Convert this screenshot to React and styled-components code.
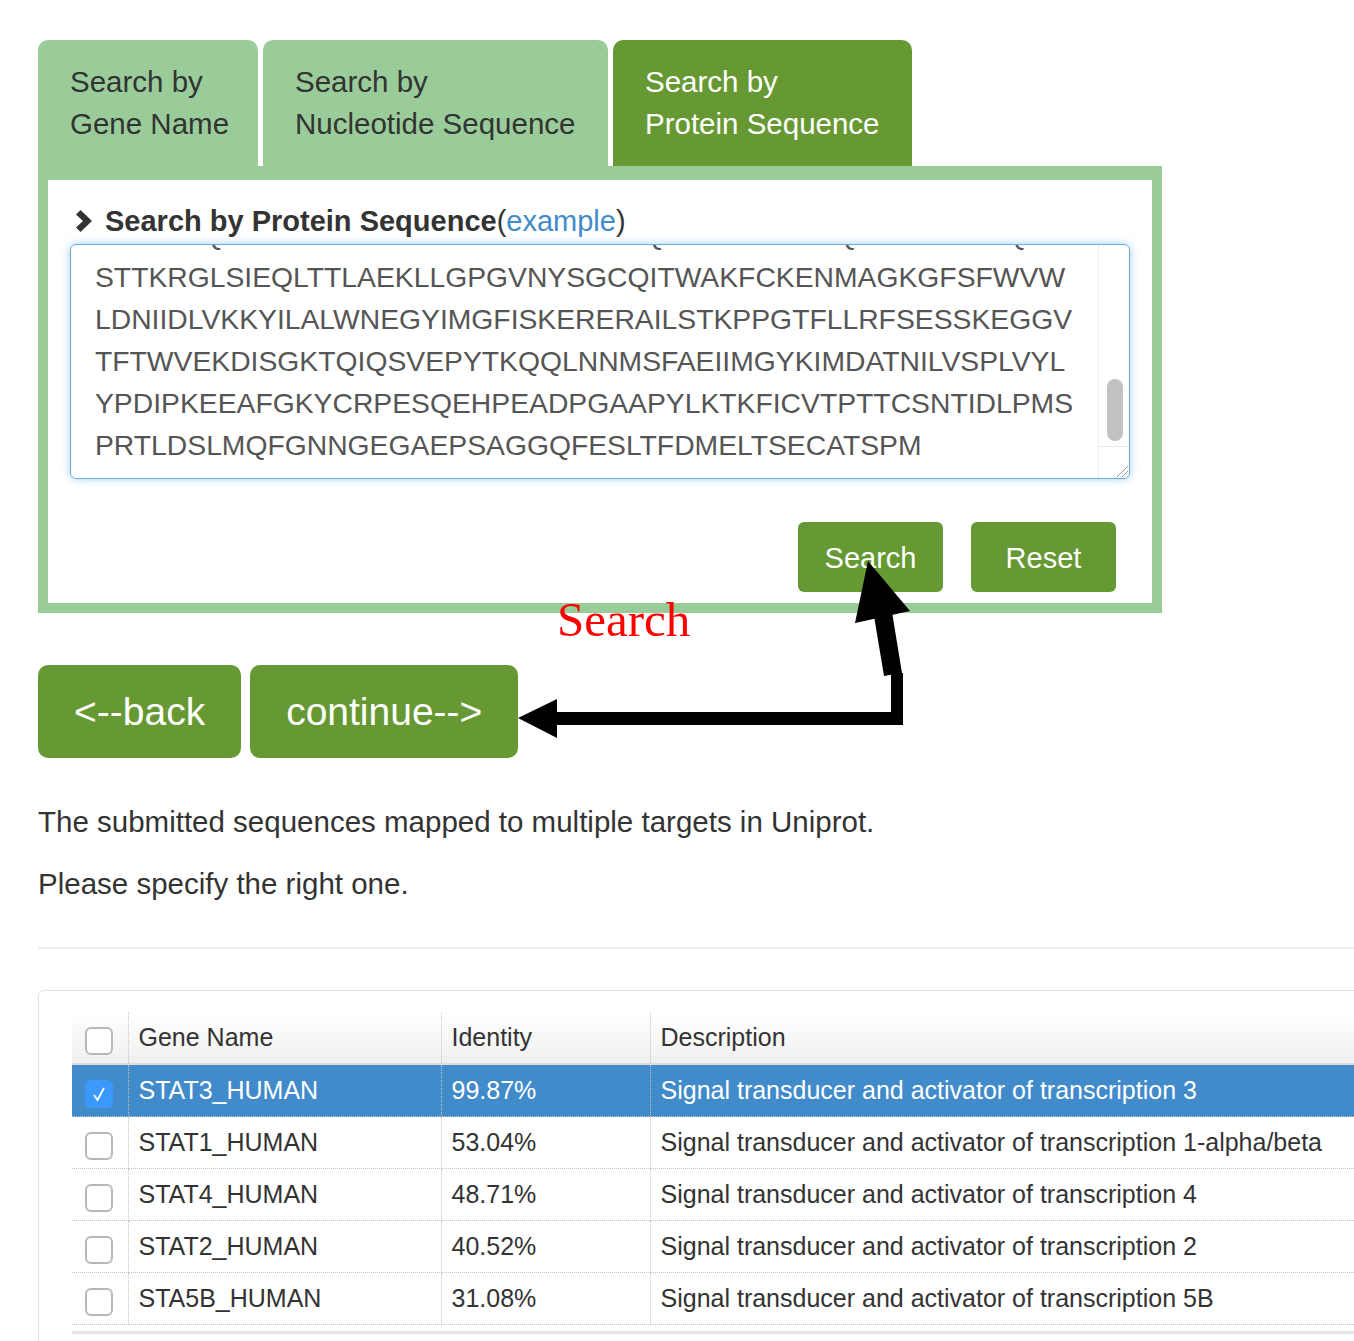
import React from "react";
import styled, { createGlobalStyle } from "styled-components";

const GlobalStyle = createGlobalStyle`
  html, body {
    margin: 0;
    padding: 0;
    background: #fff;
    overflow: hidden;
  }
  body {
    font-family: "Liberation Sans", Arial, Helvetica, sans-serif;
    color: #333;
  }
`;

const GREEN = "#669933";
const LIGHT_GREEN = "#99cc99";
const BLUE = "#428bca";

const Page = styled.div`
  position: relative;
  box-sizing: border-box;
  width: 1354px;
  height: 1341px;
  overflow: hidden;
  padding: 40px 0 0 38px;
`;

const TabRow = styled.div`
  display: flex;
  gap: 5px;
`;

const Tab = styled.div`
  box-sizing: border-box;
  width: ${(p) => p.$w}px;
  padding: 21px 0 21px 32px;
  font-size: 29.5px;
  line-height: 42px;
  border-radius: 10px 10px 0 0;
  background: ${(p) => (p.$active ? GREEN : LIGHT_GREEN)};
  color: ${(p) => (p.$active ? "#fff" : "#333")};
`;

const Panel = styled.div`
  box-sizing: border-box;
  width: 1124px;
  height: 447px;
  border: 10px solid ${LIGHT_GREEN};
  border-top-width: 14px;
  padding: 20px 22px 0;
`;

const PanelHeader = styled.div`
  display: flex;
  align-items: center;
  gap: 11px;
  padding-left: 5px;
  font-size: 29px;
  line-height: 42px;
  font-weight: bold;
  color: #333;
`;

const ExampleLink = styled.a`
  font-weight: normal;
  color: ${BLUE};
  text-decoration: none;
`;

const Paren = styled.span`
  font-weight: normal;
`;

const SeqBox = styled.div`
  display: flex;
  height: 235px;
  margin-top: 2px;
  box-sizing: border-box;
  border: 1px solid #66afe9;
  border-radius: 6px;
  box-shadow: 0 0 8px rgba(102, 175, 233, 0.6);
  overflow: hidden;
`;

const SeqText = styled.div`
  flex: 1;
  overflow: hidden;
  padding: 0 24px;
  font-size: 28.3px;
  line-height: 42px;
  color: #555;
  white-space: pre;
`;

const SeqLines = styled.div`
  margin-top: -31px;
`;

const ScrollTrack = styled.div`
  width: 30px;
  display: flex;
  flex-direction: column;
  border-left: 1px solid #ededed;
`;

const Thumb = styled.div`
  width: 16px;
  height: 62px;
  margin: 134px 0 0 8px;
  border-radius: 8px;
  background: #c1c1c1;
`;

const Grip = styled.div`
  margin-top: auto;
  height: 31px;
  border-top: 1px solid #e6e6e6;
  display: flex;
  align-items: flex-end;
  justify-content: flex-end;
`;

const ButtonRow = styled.div`
  display: flex;
  justify-content: flex-end;
  gap: 28px;
  margin-top: 43px;
  padding-right: 14px;
`;

const SmallButton = styled.button`
  width: 145px;
  height: 70px;
  border: none;
  border-radius: 6px;
  background: ${GREEN};
  color: #fff;
  font-family: inherit;
  font-size: 29px;
  padding-top: 3px;
`;

const NavRow = styled.div`
  display: flex;
  gap: 9px;
  margin-top: 52px;
`;

const NavButton = styled.button`
  height: 93px;
  padding: 0 36px;
  border: none;
  border-radius: 10px;
  background: ${GREEN};
  color: #fff;
  font-family: inherit;
  font-size: 39px;
`;

const Note = styled.p`
  margin: ${(p) => (p.$first ? "43px" : "20px")} 0 0;
  font-size: 29.5px;
  line-height: 42px;
  color: #333;
`;

const Rule = styled.hr`
  margin: 42px 0 0;
  border: none;
  border-top: 2px solid #eee;
`;

const TableCard = styled.div`
  margin-top: 41px;
  width: 1400px;
  padding: 21px 0 0 33px;
  border: 1px solid #e3e3e3;
  border-radius: 6px 0 0 0;
`;

const Table = styled.table`
  width: 1330px;
  border-collapse: collapse;
  font-size: 25px;
  table-layout: fixed;
`;

const HeadCell = styled.th`
  height: 51px;
  padding: 0 10px;
  text-align: left;
  font-weight: normal;
  color: #333;
  background: linear-gradient(#fff, #efefef);
  border-bottom: 2px solid #dcdcdc;
  border-right: 1px dotted #c4c4c4;
  vertical-align: middle;
`;

const Row = styled.tr`
  background: ${(p) => (p.$selected ? BLUE : "#fff")};
  color: ${(p) => (p.$selected ? "#fff" : "#333")};
`;

const Cell = styled.td`
  height: 51px;
  padding: 0 10px;
  border-bottom: 1px dotted #c4c4c4;
  border-right: 1px dotted #c4c4c4;
  vertical-align: middle;
  white-space: nowrap;
`;

const CheckCell = styled(Cell)`
  padding: 0 0 0 13px;
`;

const HeadCheckCell = styled(HeadCell)`
  padding: 0 0 0 13px;
`;

const Box = styled.span`
  display: flex;
  align-items: center;
  justify-content: center;
  box-sizing: border-box;
  width: 28px;
  height: 28px;
  margin-top: 6px;
  border: 2px solid ${(p) => (p.$checked ? "#3b99fc" : "#b8b8b8")};
  border-radius: 6px;
  background: ${(p) => (p.$checked ? "#3b99fc" : "#fff")};
`;

const TableFoot = styled.div`
  margin-top: 6px;
  border-top: 3px solid #e6e6e6;
  height: 10px;
`;

const Overlay = styled.svg`
  position: absolute;
  left: 0;
  top: 0;
  pointer-events: none;
`;

const Callout = styled.div`
  position: absolute;
  left: 557px;
  top: 595px;
  font-family: "Liberation Serif", "Times New Roman", serif;
  font-size: 49px;
  line-height: 1;
  color: #ff0000;
`;

const sequence = [
  "VGRIVSQMPTPRRNRSLEATPMLPRPAHTQPFSPAEDPGQWDLRSSWQPS",
  "STTKRGLSIEQLTTLAEKLLGPGVNYSGCQITWAKFCKENMAGKGFSFWVW",
  "LDNIIDLVKKYILALWNEGYIMGFISKERERAILSTKPPGTFLLRFSESSKEGGV",
  "TFTWVEKDISGKTQIQSVEPYTKQQLNNMSFAEIIMGYKIMDATNILVSPLVYL",
  "YPDIPKEEAFGKYCRPESQEHPEADPGAAPYLKTKFICVTPTTCSNTIDLPMS",
  "PRTLDSLMQFGNNGEGAEPSAGGQFESLTFDMELTSECATSPM",
];

const hits = [
  { gene: "STAT3_HUMAN", identity: "99.87%", desc: "Signal transducer and activator of transcription 3", selected: true },
  { gene: "STAT1_HUMAN", identity: "53.04%", desc: "Signal transducer and activator of transcription 1-alpha/beta" },
  { gene: "STAT4_HUMAN", identity: "48.71%", desc: "Signal transducer and activator of transcription 4" },
  { gene: "STAT2_HUMAN", identity: "40.52%", desc: "Signal transducer and activator of transcription 2" },
  { gene: "STA5B_HUMAN", identity: "31.08%", desc: "Signal transducer and activator of transcription 5B" },
];

// bold chevron in front of the panel title
function Chevron() {
  return (
    <svg width="19" height="22" viewBox="0 0 19 22">
      <polygon points="1,4.5 5.5,0 17,11 5.5,22 1,17.5 8,11" fill="#333" />
    </svg>
  );
}

function Checkbox({ checked }) {
  return (
    <Box $checked={checked}>
      {checked && (
        <svg width="20" height="20" viewBox="0 0 20 20">
          <path d="M5 11 L8.5 16 L15 4" fill="none" stroke="#fff" strokeWidth="1.8" />
        </svg>
      )}
    </Box>
  );
}

export default function App() {
  return (
    <Page>
      <GlobalStyle />
      <TabRow>
        <Tab $w={220}>
          Search by
          <br />
          Gene Name
        </Tab>
        <Tab $w={345}>
          Search by
          <br />
          Nucleotide Sequence
        </Tab>
        <Tab $w={299} $active>
          Search by
          <br />
          Protein Sequence
        </Tab>
      </TabRow>

      <Panel>
        <PanelHeader>
          <Chevron />
          <span>
            Search by Protein Sequence<Paren>(</Paren>
            <ExampleLink href="#">example</ExampleLink>
            <Paren>)</Paren>
          </span>
        </PanelHeader>
        <SeqBox>
          <SeqText>
            <SeqLines>
              {sequence.map((line) => (
                <div key={line}>{line}</div>
              ))}
            </SeqLines>
          </SeqText>
          <ScrollTrack>
            <Thumb />
            <Grip>
              <svg width="14" height="14" viewBox="0 0 14 14">
                <path d="M2 13 L13 2 M7 13 L13 7" stroke="#999" strokeWidth="1" />
              </svg>
            </Grip>
          </ScrollTrack>
        </SeqBox>
        <ButtonRow>
          <SmallButton>Search</SmallButton>
          <SmallButton>Reset</SmallButton>
        </ButtonRow>
      </Panel>

      <NavRow>
        <NavButton>{"<--back"}</NavButton>
        <NavButton>{"continue-->"}</NavButton>
      </NavRow>

      <Note $first>The submitted sequences mapped to multiple targets in Uniprot.</Note>
      <Note>Please specify the right one.</Note>
      <Rule />

      <TableCard>
        <Table>
          <colgroup>
            <col style={{ width: 56 }} />
            <col style={{ width: 313 }} />
            <col style={{ width: 209 }} />
            <col />
          </colgroup>
          <thead>
            <tr>
              <HeadCheckCell>
                <Checkbox />
              </HeadCheckCell>
              <HeadCell>Gene Name</HeadCell>
              <HeadCell>Identity</HeadCell>
              <HeadCell>Description</HeadCell>
            </tr>
          </thead>
          <tbody>
            {hits.map((h) => (
              <Row key={h.gene} $selected={h.selected}>
                <CheckCell>
                  <Checkbox checked={h.selected} />
                </CheckCell>
                <Cell>{h.gene}</Cell>
                <Cell>{h.identity}</Cell>
                <Cell>{h.desc}</Cell>
              </Row>
            ))}
          </tbody>
        </Table>
        <TableFoot />
      </TableCard>

      <Callout>Search</Callout>
      <Overlay width="1354" height="800" viewBox="0 0 1354 800">
        <polygon
          points="891,673 903,673 903,725 557,725 557,738 518,718 557,699 557,712 891,712"
          fill="#000"
        />
        <polygon points="884,676 902,673 892,612 874,616" fill="#000" />
        <polygon points="868,561 910,611 855,623" fill="#000" />
      </Overlay>
    </Page>
  );
}
